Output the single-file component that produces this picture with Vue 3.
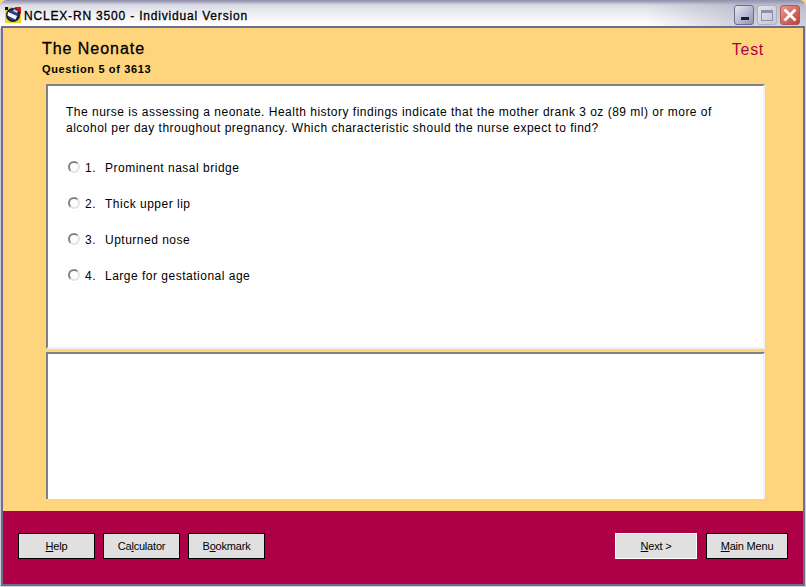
<script setup>
const choices = ['Prominent nasal bridge', 'Thick upper lip', 'Upturned nose', 'Large for gestational age']
</script>

<template>
  <div class="window">
    <header class="titlebar">
      <svg class="appicon" width="16" height="16" viewBox="0 0 16 16">
        <rect x="0" y="0" width="16" height="16" fill="#e8d820" />
        <rect x="0" y="0" width="3" height="3" fill="#111" />
        <rect x="10" y="0" width="6" height="7" fill="#d01818" />
        <circle cx="8" cy="8" r="7" fill="#15152a" />
        <circle cx="8" cy="8" r="5.5" fill="#2a3c90" />
        <path d="M3 5l9 4-1.5 3.5-8-4z" fill="#fff" />
        <path d="M9 2l4 2-1 2-4-2z" fill="#c8c8e0" />
      </svg>
      <span class="title">NCLEX-RN 3500 - Individual Version</span>
      <div class="controls">
        <div class="ctl min"><i></i></div>
        <div class="ctl max"><i></i></div>
        <div class="ctl close">
          <svg width="16" height="16" viewBox="0 0 16 16"><path d="M2.5 2.5l11 11M13.5 2.5l-11 11" stroke="#fff" stroke-width="2.8" /></svg>
        </div>
      </div>
    </header>
    <div class="client">
      <main class="upper">
        <div class="heading">
          <div>
            <h1>The Neonate</h1>
            <p class="count">Question 5 of 3613</p>
          </div>
          <span class="mode">Test</span>
        </div>
        <section class="panel question">
          <p class="stem">The nurse is assessing a neonate. Health history findings indicate that the mother drank 3 oz (89 ml) or more of alcohol per day throughout pregnancy. Which characteristic should the nurse expect to find?</p>
          <ul>
            <li v-for="(c, i) in choices" :key="c">
              <span class="radio"></span>
              <span class="num">{{ i + 1 }}.</span>
              <span>{{ c }}</span>
            </li>
          </ul>
        </section>
        <section class="panel feedback"></section>
      </main>
      <footer class="bar">
        <div class="group">
          <button class="btn"><u>H</u>elp</button>
          <button class="btn">Ca<u>l</u>culator</button>
          <button class="btn">B<u>o</u>okmark</button>
        </div>
        <div class="group right">
          <button class="btn next"><u>N</u>ext &gt;</button>
          <button class="btn"><u>M</u>ain Menu</button>
        </div>
      </footer>
    </div>
  </div>
</template>

<style scoped>
.window {
  width: 806px;
  height: 587px;
  box-sizing: border-box;
  display: flex;
  flex-direction: column;
  background: #cfcfdc;
  border-radius: 7px 7px 0 0;
  overflow: hidden;
  font-family: "Liberation Sans", Arial, sans-serif;
  color: #000;
}
.titlebar {
  height: 28px;
  flex: none;
  box-sizing: border-box;
  display: flex;
  align-items: center;
  padding: 3px 5px 1px 5px;
  background:
    linear-gradient(90deg, rgba(150, 150, 175, 0) 80%, rgba(150, 150, 175, 0.45) 92%),
    linear-gradient(#8c8ca8 0, #a8a8c0 2px, #dcdce6 5px, #eeeef3 14px, #ffffff 24px);
}
.appicon { flex: none; }
.title {
  margin: 2px 0 0 3px;
  font-size: 12px;
  font-weight: 400;
  letter-spacing: 0.82px;
  -webkit-text-stroke: 0.3px #000;
}
.controls {
  margin-left: auto;
  display: flex;
  gap: 3px;
  padding-right: 1px;
}
.ctl {
  width: 20px;
  height: 20px;
  box-sizing: border-box;
  border-radius: 3px;
  border: 1px solid #8f8fa8;
  display: flex;
  align-items: center;
  justify-content: center;
}
.min {
  background: linear-gradient(135deg, #e8e8f2, #8e92b4);
  border-color: #6c6c8c;
  align-items: flex-end;
  justify-content: flex-start;
}
.min i {
  width: 8px;
  height: 3px;
  background: #1c1c38;
  margin: 0 0 4px 6px;
}
.max {
  background: linear-gradient(135deg, #e4e4ea, #c4c6d8);
  border-color: #b0b0c4;
}
.max i {
  width: 12px;
  height: 11px;
  box-sizing: border-box;
  border: 1px solid #8e90ae;
  border-top-width: 3px;
}
.close {
  background: linear-gradient(135deg, #e89a90, #bc4038);
  border-color: #a85a58;
}
.client {
  flex: 1;
  display: flex;
  flex-direction: column;
  margin: 0 3px 3px;
  background: #fed57c;
  min-height: 0;
  box-shadow: 0 0 0 2px #6e6e8c;
  position: relative;
}
.upper {
  flex: 1;
  display: flex;
  flex-direction: column;
  min-height: 0;
  padding: 0 38px 12px 43px;
}
.heading {
  height: 56px;
  flex: none;
  display: flex;
  justify-content: space-between;
  box-sizing: border-box;
  margin-left: -4px;
  margin-right: 1px;
}
h1 {
  margin: 12px 0 0;
  font-size: 16px;
  line-height: 17px;
  font-weight: 400;
  letter-spacing: 0.96px;
  -webkit-text-stroke: 0.3px #000;
}
.count {
  margin: 6px 0 0;
  font-size: 11px;
  line-height: 13px;
  font-weight: 700;
  letter-spacing: 0.63px;
}
.mode {
  margin-top: 13px;
  font-size: 16px;
  line-height: 18px;
  letter-spacing: 0.7px;
  color: #ad0046;
}
.panel {
  background: #fff;
  box-sizing: border-box;
  border-top: 2px solid #808080;
  border-left: 2px solid #808080;
  border-right: 2px solid #f0f0f0;
  border-bottom: 2px solid #f0f0f0;
}
.question {
  height: 265px;
  flex: none;
  padding: 18px 20px 0 18px;
}
.feedback {
  flex: 1;
  margin-top: 3px;
  border-bottom: 0;
}
.stem {
  margin: 0;
  font-size: 12px;
  line-height: 16px;
  letter-spacing: 0.49px;
}
ul {
  list-style: none;
  margin: 24px 0 0;
  padding: 0;
}
li {
  height: 36px;
  display: flex;
  align-items: flex-start;
  font-size: 12px;
  line-height: 16px;
  letter-spacing: 0.5px;
}
.radio {
  width: 12px;
  height: 12px;
  box-sizing: border-box;
  margin: 1px 0 0 2px;
  border-radius: 50%;
  background: #fdfdf8;
  border: 2px solid;
  border-color: #808080 #e4e4e4 #e4e4e4 #808080;
}
.num {
  width: 20px;
  margin-left: 5px;
}
.bar {
  height: 73px;
  flex: none;
  box-sizing: border-box;
  background: #ad0046;
  display: flex;
  justify-content: space-between;
  padding: 22px 15px 0;
}
.group {
  display: flex;
  gap: 8px;
  align-items: flex-start;
}
.right { gap: 9px; }
.btn {
  width: 77px;
  height: 26px;
  padding: 0;
  box-sizing: border-box;
  border: 1px solid #000;
  background: #e0e0e0;
  color: #000;
  font-family: "Liberation Sans", Arial, sans-serif;
  font-size: 11px;
  line-height: 24px;
  letter-spacing: -0.2px;
}
.right .btn { width: 82px; }
.right .next { border-color: #fff; }
</style>

<style>
html, body { margin: 0; background: #fed57c; overflow: hidden; }
</style>
